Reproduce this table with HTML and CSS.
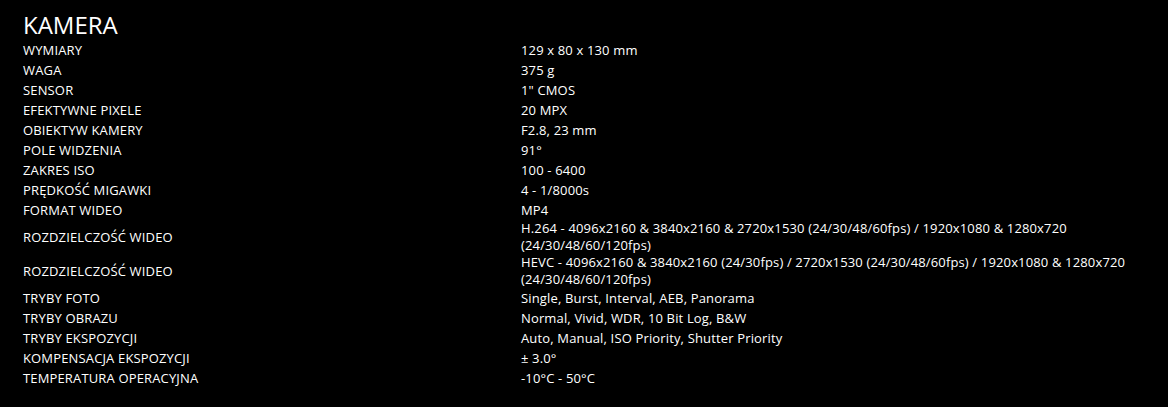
FILE: index.html
```html
<!DOCTYPE html>
<html lang="pl">
<head>
<meta charset="utf-8">
<link rel="stylesheet" href="styles.css">
</head>
<body>
<section class="specs">
  <h2 class="specs-title">KAMERA</h2>
  <div class="spec-table">
    <div class="spec-row"><div class="spec-label">WYMIARY</div><div class="spec-value">129 x 80 x 130 mm</div></div>
    <div class="spec-row"><div class="spec-label">WAGA</div><div class="spec-value">375 g</div></div>
    <div class="spec-row"><div class="spec-label">SENSOR</div><div class="spec-value">1" CMOS</div></div>
    <div class="spec-row"><div class="spec-label">EFEKTYWNE PIXELE</div><div class="spec-value">20 MPX</div></div>
    <div class="spec-row"><div class="spec-label">OBIEKTYW KAMERY</div><div class="spec-value">F2.8, 23 mm</div></div>
    <div class="spec-row"><div class="spec-label">POLE WIDZENIA</div><div class="spec-value">91°</div></div>
    <div class="spec-row"><div class="spec-label">ZAKRES ISO</div><div class="spec-value">100 - 6400</div></div>
    <div class="spec-row"><div class="spec-label">PRĘDKOŚĆ MIGAWKI</div><div class="spec-value">4 - 1/8000s</div></div>
    <div class="spec-row"><div class="spec-label">FORMAT WIDEO</div><div class="spec-value">MP4</div></div>
    <div class="spec-row"><div class="spec-label">ROZDZIELCZOŚĆ WIDEO</div><div class="spec-value">H.264 - 4096x2160 &amp; 3840x2160 &amp; 2720x1530 (24/30/48/60fps) / 1920x1080 &amp; 1280x720 (24/30/48/60/120fps)</div></div>
    <div class="spec-row"><div class="spec-label">ROZDZIELCZOŚĆ WIDEO</div><div class="spec-value">HEVC - 4096x2160 &amp; 3840x2160 (24/30fps) / 2720x1530 (24/30/48/60fps) / 1920x1080 &amp; 1280x720 (24/30/48/60/120fps)</div></div>
    <div class="spec-row"><div class="spec-label">TRYBY FOTO</div><div class="spec-value">Single, Burst, Interval, AEB, Panorama</div></div>
    <div class="spec-row"><div class="spec-label">TRYBY OBRAZU</div><div class="spec-value">Normal, Vivid, WDR, 10 Bit Log, B&amp;W</div></div>
    <div class="spec-row"><div class="spec-label">TRYBY EKSPOZYCJI</div><div class="spec-value">Auto, Manual, ISO Priority, Shutter Priority</div></div>
    <div class="spec-row"><div class="spec-label">KOMPENSACJA EKSPOZYCJI</div><div class="spec-value">± 3.0°</div></div>
    <div class="spec-row"><div class="spec-label">TEMPERATURA OPERACYJNA</div><div class="spec-value">-10°C - 50°C</div></div>
  </div>
</section>
</body>
</html>
```
FILE: styles.css
```css
html, body {
  margin: 0;
  padding: 0;
  background: #000;
}
body {
  color: #fff;
  font-family: "Open Sans", "Liberation Sans", sans-serif;
  font-size: 13px;
  letter-spacing: 0.15px;
}
.specs {
  padding: 10px 23px 0 23px;
}
.specs-title {
  margin: 0;
  font-size: 24px;
  font-weight: 400;
  line-height: 30px;
  letter-spacing: 0;
}
.spec-table {
  display: flex;
  flex-direction: column;
}
.spec-row {
  display: grid;
  grid-template-columns: 498px 1fr;
  min-height: 20px;
  align-items: center;
  line-height: 17px;
}
```
